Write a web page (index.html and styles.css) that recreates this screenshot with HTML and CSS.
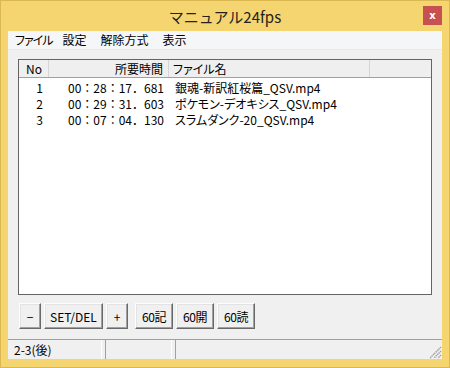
FILE: index.html
```html
<!DOCTYPE html>
<html lang="ja">
<head>
    <meta charset="UTF-8">
    <title>マニュアル24fps</title>
    <link rel="stylesheet" href="styles.css">
</head>
<body>
    <div class="window">
        <div class="titlebar">
            <span></span>
            <span class="title">マニュアル24fps</span>
            <button class="close" type="button">x</button>
        </div>
        <div class="client">
            <div class="menubar">
                <span class="menu-item menu-first">ファイル</span>
                <span class="menu-item">設定</span>
                <span class="menu-item">解除方式</span>
                <span class="menu-item">表示</span>
            </div>
            <div class="listview">
                <div class="row header">
                    <span class="col col-no">No</span>
                    <span class="col col-time">所要時間</span>
                    <span class="col col-name">ファイル名</span>
                    <span class="col col-rest"></span>
                </div>
                <div class="rows">
                    <div class="row">
                        <span class="col col-no">1</span>
                        <span class="col col-time">00：28：17．681</span>
                        <span class="col col-name">銀魂-新訳紅桜篇_QSV.mp4</span>
                    </div>
                    <div class="row">
                        <span class="col col-no">2</span>
                        <span class="col col-time">00：29：31．603</span>
                        <span class="col col-name">ポケモン-デオキシス_QSV.mp4</span>
                    </div>
                    <div class="row">
                        <span class="col col-no">3</span>
                        <span class="col col-time">00：07：04．130</span>
                        <span class="col col-name">スラムダンク-20_QSV.mp4</span>
                    </div>
                </div>
            </div>
            <div class="toolbar">
                <button type="button" class="btn btn-small">−</button>
                <button type="button" class="btn btn-wide">SET/DEL</button>
                <button type="button" class="btn btn-small">+</button>
                <button type="button" class="btn btn-60 gap">60記</button>
                <button type="button" class="btn btn-60">60開</button>
                <button type="button" class="btn btn-60">60読</button>
            </div>
            <div class="statusbar">
                <span class="panel panel-1">2-3(後)</span>
                <span class="panel panel-2"></span>
                <span class="panel panel-3">
                    <svg class="grip" width="13" height="13" viewBox="0 0 13 13">
                        <path d="M12 1 L1 12 M12 5 L5 12 M12 9 L9 12" stroke="#a0a0a0" stroke-width="1.4" stroke-dasharray="1.4 0.6" fill="none"/>
                    </svg>
                </span>
            </div>
        </div>
    </div>
</body>
</html>
```

FILE: styles.css
```css
body {
    margin: 0;
    font-family: "Noto Sans CJK JP", "Noto Sans", sans-serif;
    font-size: 12px;
    font-feature-settings: "palt";
    color: #000;
}
.window {
    box-sizing: border-box;
    width: 450px;
    height: 368px;
    background: #f5d56f;
    border: 1px solid #dcb853;
    padding: 0 7px 8px 7px;
    display: flex;
    flex-direction: column;
}
.titlebar {
    height: 30px;
    display: grid;
    grid-template-columns: 1fr auto 1fr;
    align-items: start;
}
.title {
    font-size: 15px;
    line-height: 30px;
    color: #222;
    margin-top: 1px;
    font-feature-settings: normal;
}
.close {
    justify-self: end;
    margin-top: 5px;
    width: 19px;
    height: 19px;
    border: none;
    padding: 0;
    background: #c75050;
    color: #fff;
    font-family: "DejaVu Sans", sans-serif;
    font-weight: bold;
    font-size: 10px;
    line-height: 17px;
}
.client {
    flex: 1;
    background: #f0f0f0;
    display: flex;
    flex-direction: column;
}
.menubar {
    height: 18px;
    background: #f5f6f7;
    border-bottom: 1px solid #e8e9ea;
    display: flex;
    align-items: center;
    padding-left: 7px;
}
.menu-item {
    line-height: 18px;
    margin-right: 14px;
}
.menu-first {
    letter-spacing: -1px;
    margin-right: 10px;
}
.listview {
    margin: 9px 10px 0 10px;
    height: 236px;
    box-sizing: border-box;
    border: 1px solid #646464;
    background: #fff;
}
.row {
    display: flex;
    height: 16px;
    line-height: 16px;
}
.header {
    height: 17px;
    line-height: 17px;
    background: #efefef;
    border-bottom: 1px solid #a0a0a0;
}
.rows {
    padding-top: 2px;
}
.col {
    box-sizing: border-box;
    white-space: nowrap;
    flex: none;
}
.col-no {
    width: 30px;
    text-align: right;
    padding-right: 6px;
}
.col-time {
    width: 120px;
    text-align: right;
    padding-right: 5px;
    font-feature-settings: normal;
}
.col-name {
    width: 201px;
    padding-left: 6px;
}
.col-rest {
    flex: 1;
}
.header .col-no,
.header .col-time,
.header .col-name {
    border-right: 1px solid #d5d5d5;
}
.header .col-name {
    padding-left: 4px;
}
.toolbar {
    display: flex;
    gap: 3px;
    margin: 8px 0 0 11px;
}
.btn {
    box-sizing: border-box;
    height: 26px;
    padding: 0;
    font-family: "Noto Sans CJK JP", "Noto Sans", sans-serif;
    font-size: 12px;
    background: #f0f0f0;
    border: 1px solid;
    border-color: #fdfdfd #696969 #696969 #fdfdfd;
    box-shadow: inset -1px -1px 0 #a0a0a0, inset 1px 1px 0 #e3e3e3;
    color: #000;
}
.btn-small {
    width: 22px;
}
.btn-wide {
    width: 59px;
}
.btn-60 {
    width: 38px;
    letter-spacing: -0.5px;
}
.gap {
    margin-left: 4px;
}
.statusbar {
    margin-top: auto;
    height: 19px;
    border-top: 1px solid #a0a0a0;
    display: flex;
    gap: 3px;
}
.panel {
    box-sizing: border-box;
    height: 19px;
    line-height: 19px;
    border-left: 1px solid #a0a0a0;
    border-right: 1px solid #fff;
}
.panel-1 {
    width: 94px;
    padding-left: 6px;
    border-left: none;
}
.panel-2 {
    width: 67px;
}
.panel-3 {
    flex: 1;
    border-right: none;
    display: flex;
    justify-content: flex-end;
    align-items: flex-end;
}
.grip {
    display: block;
}
```
